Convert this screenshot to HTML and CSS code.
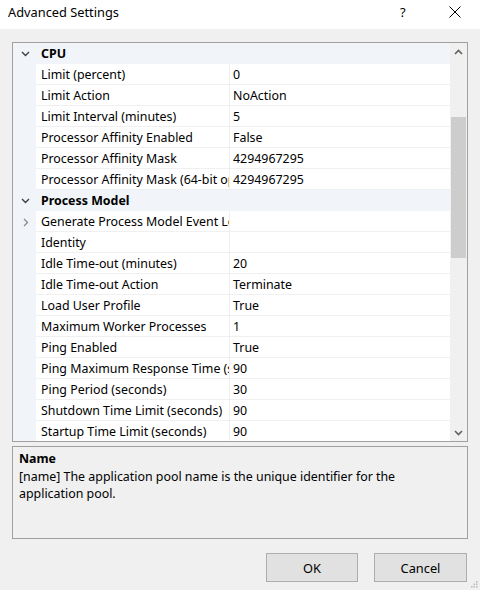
FILE: index.html
```
<!DOCTYPE html>
<html>
<head>
<meta charset="utf-8">
<link rel="stylesheet" href="styles.css">
</head>
<body>
<div class="dialog">
  <div class="titlebar">
    <span class="title">Advanced Settings</span>
    <span class="help">?</span>
    <span class="close"><svg width="12" height="12" viewBox="0 0 12 12"><path d="M0.5 0.5L11.5 11.5M11.5 0.5L0.5 11.5" stroke="#000" stroke-width="1"/></svg></span>
  </div>
  <div class="grid">
    <div class="rows">
      <div class="row cat"><span class="margin"><svg width="9" height="6" viewBox="0 0 9 6"><path d="M1 1L4.5 4.5L8 1" fill="none" stroke="#404040" stroke-width="1.4"/></svg></span><span class="catname">CPU</span></div>
      <div class="row"><span class="margin"></span><span class="name">Limit (percent)</span><span class="value">0</span></div>
      <div class="row"><span class="margin"></span><span class="name">Limit Action</span><span class="value">NoAction</span></div>
      <div class="row"><span class="margin"></span><span class="name">Limit Interval (minutes)</span><span class="value">5</span></div>
      <div class="row"><span class="margin"></span><span class="name">Processor Affinity Enabled</span><span class="value">False</span></div>
      <div class="row"><span class="margin"></span><span class="name">Processor Affinity Mask</span><span class="value">4294967295</span></div>
      <div class="row"><span class="margin"></span><span class="name">Processor Affinity Mask (64-bit option)</span><span class="value">4294967295</span></div>
      <div class="row cat"><span class="margin"><svg width="9" height="6" viewBox="0 0 9 6"><path d="M1 1L4.5 4.5L8 1" fill="none" stroke="#404040" stroke-width="1.4"/></svg></span><span class="catname">Process Model</span></div>
      <div class="row"><span class="margin"><svg width="6" height="9" viewBox="0 0 6 9"><path d="M1 1L4.5 4.5L1 8" fill="none" stroke="#8a8a8a" stroke-width="1.3"/></svg></span><span class="name">Generate Process Model Event Log Entry</span><span class="value"></span></div>
      <div class="row"><span class="margin"></span><span class="name">Identity</span><span class="value"></span></div>
      <div class="row"><span class="margin"></span><span class="name">Idle Time-out (minutes)</span><span class="value">20</span></div>
      <div class="row"><span class="margin"></span><span class="name">Idle Time-out Action</span><span class="value">Terminate</span></div>
      <div class="row"><span class="margin"></span><span class="name">Load User Profile</span><span class="value">True</span></div>
      <div class="row"><span class="margin"></span><span class="name">Maximum Worker Processes</span><span class="value">1</span></div>
      <div class="row"><span class="margin"></span><span class="name">Ping Enabled</span><span class="value">True</span></div>
      <div class="row"><span class="margin"></span><span class="name">Ping Maximum Response Time (seconds)</span><span class="value">90</span></div>
      <div class="row"><span class="margin"></span><span class="name">Ping Period (seconds)</span><span class="value">30</span></div>
      <div class="row"><span class="margin"></span><span class="name">Shutdown Time Limit (seconds)</span><span class="value">90</span></div>
      <div class="row"><span class="margin"></span><span class="name">Startup Time Limit (seconds)</span><span class="value">90</span></div>
    </div>
    <div class="scrollbar">
      <div class="arrow"><svg width="9" height="6" viewBox="0 0 9 6"><path d="M1 5L4.5 1.5L8 5" fill="none" stroke="#606060" stroke-width="1.6"/></svg></div>
      <div class="track"><div class="thumb"></div></div>
      <div class="arrow"><svg width="9" height="6" viewBox="0 0 9 6"><path d="M1 1L4.5 4.5L8 1" fill="none" stroke="#606060" stroke-width="1.6"/></svg></div>
    </div>
  </div>
  <div class="desc">
    <div class="desc-title">Name</div>
    <div class="desc-text">[name] The application pool name is the unique identifier for the application pool.</div>
  </div>
  <div class="buttons">
    <button class="btn ok">OK</button>
    <button class="btn">Cancel</button>
  </div>
  <svg class="grip" width="7" height="7" viewBox="0 0 7 7"><rect x="5" y="0" width="1.5" height="1.5" fill="#b8b8b8"/><rect x="2.5" y="2.5" width="1.5" height="1.5" fill="#b8b8b8"/><rect x="5" y="2.5" width="1.5" height="1.5" fill="#b8b8b8"/><rect x="0" y="5" width="1.5" height="1.5" fill="#b8b8b8"/><rect x="2.5" y="5" width="1.5" height="1.5" fill="#b8b8b8"/><rect x="5" y="5" width="1.5" height="1.5" fill="#b8b8b8"/></svg>
</div>
</body>
</html>
```
FILE: styles.css
```
html, body {
  margin: 0;
  padding: 0;
}
body {
  background: #f0f0f0;
  font-family: "Noto Sans", "Open Sans", sans-serif;
  font-size: 12.4px;
  color: #000;
}
.dialog {
  position: relative;
  width: 480px;
  height: 590px;
  overflow: hidden;
}
.titlebar {
  height: 29px;
  background: #fff;
  display: flex;
  align-items: center;
  padding-left: 8px;
  padding-bottom: 6px;
  box-sizing: border-box;
}
.title {
  flex: 1;
  font-size: 12.8px;
}
.help {
  font-size: 13px;
  width: 49px;
  text-align: left;
}
.close {
  width: 31px;
  display: flex;
  padding-top: 1px;
}
.grid {
  margin: 13px 12px 0 12px;
  height: 400px;
  box-sizing: border-box;
  border: 1px solid #a0a0a0;
  background: #fff;
  display: flex;
}
.rows {
  flex: 1;
  overflow: hidden;
}
.row {
  display: grid;
  grid-template-columns: 23px 194px 1fr;
  height: 21px;
  line-height: 21px;
  box-sizing: border-box;
}
.margin {
  background: #f1f4f9;
  display: flex;
  align-items: center;
  justify-content: center;
  padding-left: 2px;
  padding-top: 1px;
  box-sizing: border-box;
}
.name {
  padding-left: 5px;
  white-space: nowrap;
  overflow: hidden;
  text-overflow: clip;
  border-bottom: 1px solid #f0f0f0;
  border-right: 1px solid #f0f0f0;
}
.value {
  padding-left: 3px;
  white-space: nowrap;
  overflow: hidden;
  border-bottom: 1px solid #f0f0f0;
}
.row.cat {
  background: #f1f4f9;
}
.catname {
  grid-column: 2 / 4;
  padding-left: 5px;
  font-weight: bold;
}
.scrollbar {
  width: 17px;
  background: #f0f0f0;
  display: flex;
  flex-direction: column;
}
.arrow {
  height: 17px;
  display: flex;
  align-items: center;
  justify-content: center;
}
.track {
  flex: 1;
  padding-top: 57px;
}
.thumb {
  margin-left: 1px;
  width: 15px;
  height: 141px;
  background: #cdcdcd;
}
.desc {
  margin: 4px 12px 0 12px;
  height: 93px;
  box-sizing: border-box;
  border: 1px solid #a0a0a0;
  padding: 2px 6px;
}
.desc-title {
  font-weight: bold;
  line-height: 19px;
}
.desc-text {
  line-height: 17px;
}
.buttons {
  display: flex;
  justify-content: flex-end;
  gap: 16px;
  margin: 14px 13px 0 0;
}
.btn {
  width: 93px;
  height: 29px;
  background: #e1e1e1;
  border: 1px solid #adadad;
  font-family: "Noto Sans", "Open Sans", sans-serif;
  font-size: 12.8px;
  color: #000;
  padding: 0;
}
.btn.ok {
  width: 92px;
}
.grip {
  position: absolute;
  right: 2px;
  bottom: 2px;
}
```
